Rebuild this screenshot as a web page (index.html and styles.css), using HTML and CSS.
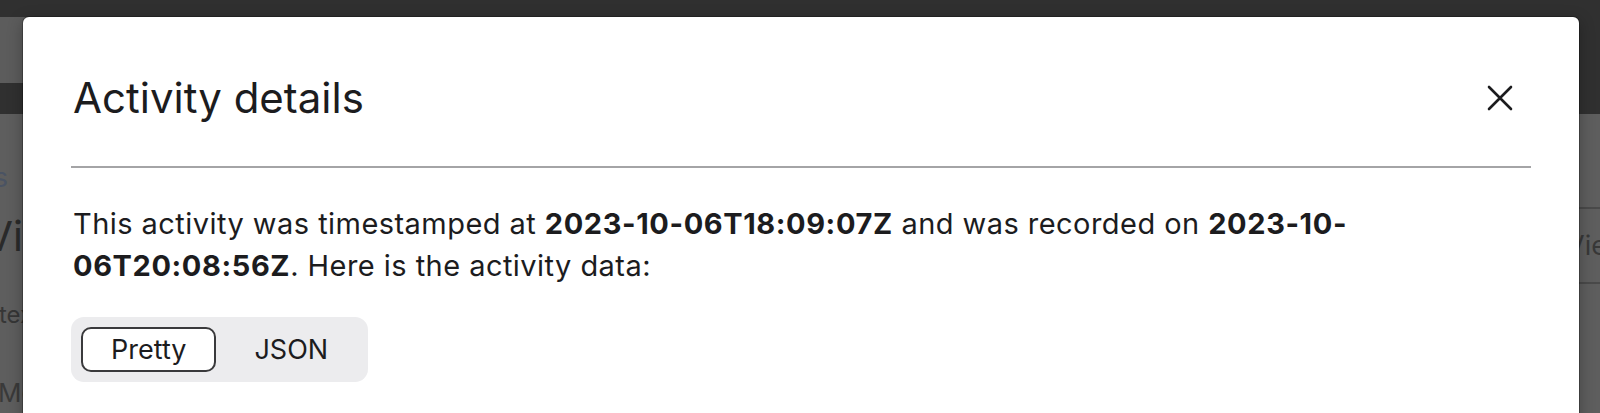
FILE: index.html
```html
<!DOCTYPE html>
<html lang="en">
<head>
<meta charset="utf-8">
<title>Activity details</title>
<link rel="stylesheet" href="styles.css">
</head>
<body>
<div class="page">
  <header class="nav"><div class="nav-tab"></div></header>
  <div class="page-body">
    <div class="side-left">
      <div class="bg-line crumb"><span>Activities</span></div>
      <div class="bg-line heading"><span>Activity Vi</span></div>
      <div class="bg-line meta-a"><span>text</span></div>
      <div class="bg-line meta-b"><span>More</span></div>
    </div>
    <div class="side-mid"></div>
    <div class="side-right">
      <div class="row-line"></div>
      <div class="row-cell"><span>View</span></div>
      <div class="row-line"></div>
    </div>
  </div>
</div>

<div class="modal" role="dialog" aria-labelledby="modal-title">
  <div class="modal-header">
    <h1 id="modal-title" class="modal-title">Activity details</h1>
    <button class="close-btn" aria-label="Close">
      <svg viewBox="0 0 26 26" width="26" height="26" aria-hidden="true">
        <path d="M2 2 L24 24 M24 2 L2 24" stroke="#1c1c1e" stroke-width="2.6" stroke-linecap="round" fill="none"/>
      </svg>
    </button>
  </div>
  <hr class="divider">
  <p class="modal-text">This activity was timestamped at <strong>2023-10-06T18:09:07Z</strong> and was recorded on <strong>2023-10-<wbr>06T20:08:56Z</strong>. Here is the activity data:</p>
  <div class="toggle">
    <button class="seg seg-active">Pretty</button>
    <button class="seg">JSON</button>
  </div>
</div>
</body>
</html>
```

FILE: styles.css
```css
html, body {
  margin: 0;
  padding: 0;
  height: 100%;
  overflow: hidden;
}

body {
  font-family: Inter, "Noto Sans", "Liberation Sans", sans-serif;
  background: #5e5e5e;
  position: relative;
}

/* ---------- dimmed background page ---------- */
.page {
  height: 100%;
  display: flex;
  flex-direction: column;
}

.nav {
  height: 114px;
  background: #303030;
  flex: none;
}

.nav-tab {
  margin-top: 17px;
  height: 66px;
  width: 400px;
  background: #5c5c5c;
}

.page-body {
  flex: 1;
  display: grid;
  grid-template-columns: 23px 1fr 21px;
}

.side-left {
  overflow: hidden;
  display: flex;
  flex-direction: column;
}

.bg-line {
  display: flex;
  white-space: nowrap;
}

.crumb {
  justify-content: flex-end;
  margin-top: 48px;
  padding-right: 15px;
  font-size: 27px;
  line-height: 32px;
  color: #4a5363;
}

.heading {
  justify-content: flex-end;
  margin-top: 18px;
  font-size: 41px;
  line-height: 48px;
  color: #2a2a2a;
}

.meta-a {
  margin-top: 40px;
  margin-left: -1px;
  font-size: 24px;
  line-height: 30px;
  color: #363636;
}

.meta-b {
  margin-top: 48px;
  margin-left: -2px;
  font-size: 26px;
  line-height: 30px;
  color: #3a3a3a;
}

.side-right {
  overflow: hidden;
  display: flex;
  flex-direction: column;
}

.row-line {
  height: 2px;
  background: #4a4a4a;
}

.row-line:first-child {
  margin-top: 93px;
}

.row-cell {
  height: 73px;
  display: flex;
  align-items: center;
  white-space: nowrap;
  font-size: 27px;
  color: #383838;
  margin-left: -13px;
}

/* ---------- modal ---------- */
.modal {
  position: absolute;
  top: 17px;
  left: 23px;
  right: 21px;
  bottom: -40px;
  background: #ffffff;
  border-radius: 6px;
  box-shadow: 0 0 0 1px rgba(0, 0, 0, 0.25), 0 4px 16px rgba(0, 0, 0, 0.3);
  padding: 0 48px 0 50px;
  color: #1c1c1e;
}

.modal-header {
  display: flex;
  align-items: center;
  justify-content: space-between;
  padding-top: 55px;
}

.modal-title {
  margin: 0;
  font-size: 42px;
  font-weight: 400;
  line-height: 52px;
  color: #1c1c1e;
}

.close-btn {
  border: 0;
  background: none;
  padding: 0;
  margin-right: 18px;
  width: 26px;
  height: 26px;
  display: flex;
  cursor: pointer;
}

.divider {
  margin: 42px 0 0 -2px;
  border: 0;
  height: 2px;
  background: #a4a4a6;
}

.modal-text {
  margin: 35px 0 0 0;
  font-size: 29px;
  line-height: 42px;
  letter-spacing: 0.45px;
  color: #1c1c1e;
}

.modal-text strong {
  font-weight: 700;
  letter-spacing: 0.6px;
}

.toggle {
  margin-top: 30px;
  margin-left: -2px;
  display: inline-flex;
  gap: 8px;
  padding: 10px;
  background: #ececee;
  border-radius: 13px;
}

.seg {
  font-family: inherit;
  font-size: 27px;
  line-height: 41px;
  padding: 0 28px;
  border: 2px solid transparent;
  border-radius: 10px;
  background: transparent;
  color: #1c1c1e;
  cursor: pointer;
}

.seg-active {
  background: #ffffff;
  border-color: #3a3a3c;
}
```
